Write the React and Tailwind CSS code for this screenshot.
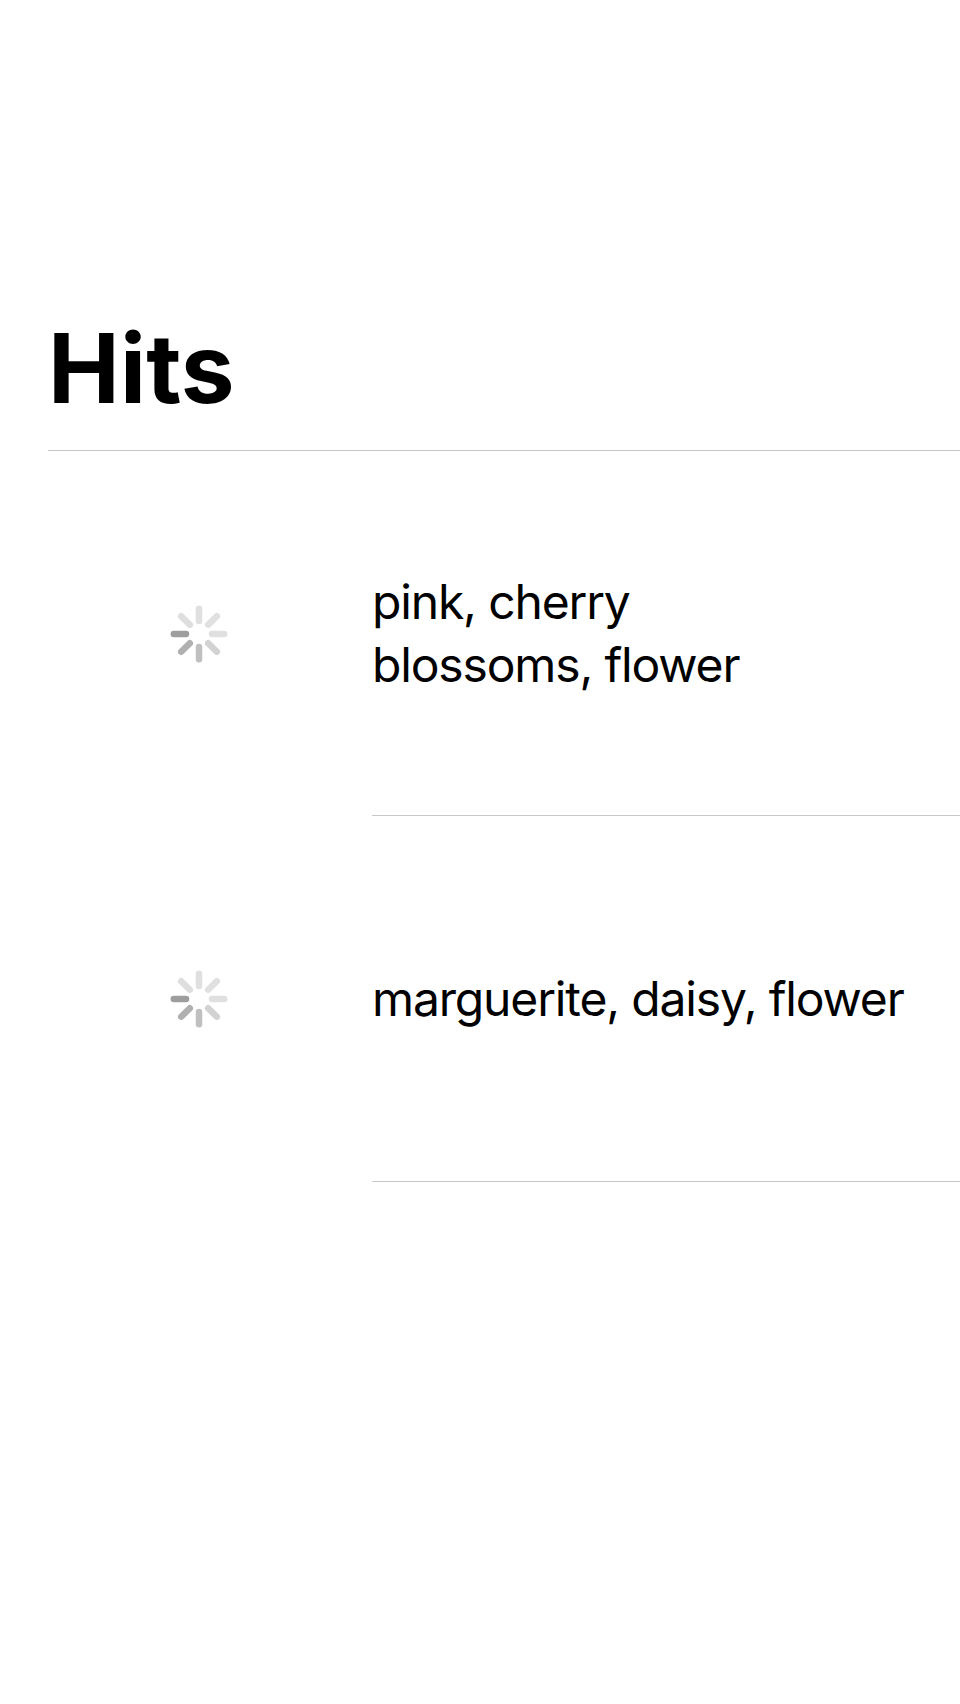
import React from "react";

const hits = [
  { id: 1, tags: "pink, cherry blossoms, flower" },
  { id: 2, tags: "marguerite, daisy, flower" },
];

// starts at the top spoke, goes clockwise
const spokes = ["#e0e0e0", "#e0e0e0", "#e0e0e0", "#d2d2d2", "#c0c0c0", "#b0b0b0", "#9e9e9e", "#dedede"];

function Spinner() {
  return (
    <svg width="60" height="60" viewBox="0 0 60 60" aria-label="loading">
      {spokes.map((color, i) => (
        <line
          key={i}
          x1="30"
          y1="4.8"
          x2="30"
          y2="17"
          stroke={color}
          strokeWidth="6.5"
          strokeLinecap="round"
          transform={`rotate(${i * 45} 30 30)`}
        />
      ))}
    </svg>
  );
}

function HitRow({ tags }) {
  return (
    <div className="flex gap-[23px]">
      <div className="flex h-[365.4px] w-[301px] shrink-0 items-center justify-center">
        <Spinner />
      </div>
      <div className="flex min-w-0 flex-1 items-center border-b border-[#c8c8c8] pr-6">
        <p className="text-[48px] leading-[63px] tracking-[-1.15px] text-black text-balance">{tags}</p>
      </div>
    </div>
  );
}

export default function App() {
  return (
    <div className="min-h-[1704px] bg-white pl-12 font-['Inter',sans-serif]">
      <header className="border-b border-[#c8c8c8] pt-[310px] pb-[24px]">
        <h1 className="text-[96px] leading-[116px] font-[750] tracking-[0.2px] text-black">Hits</h1>
      </header>
      {hits.map((hit) => (
        <HitRow key={hit.id} tags={hit.tags} />
      ))}
    </div>
  );
}
